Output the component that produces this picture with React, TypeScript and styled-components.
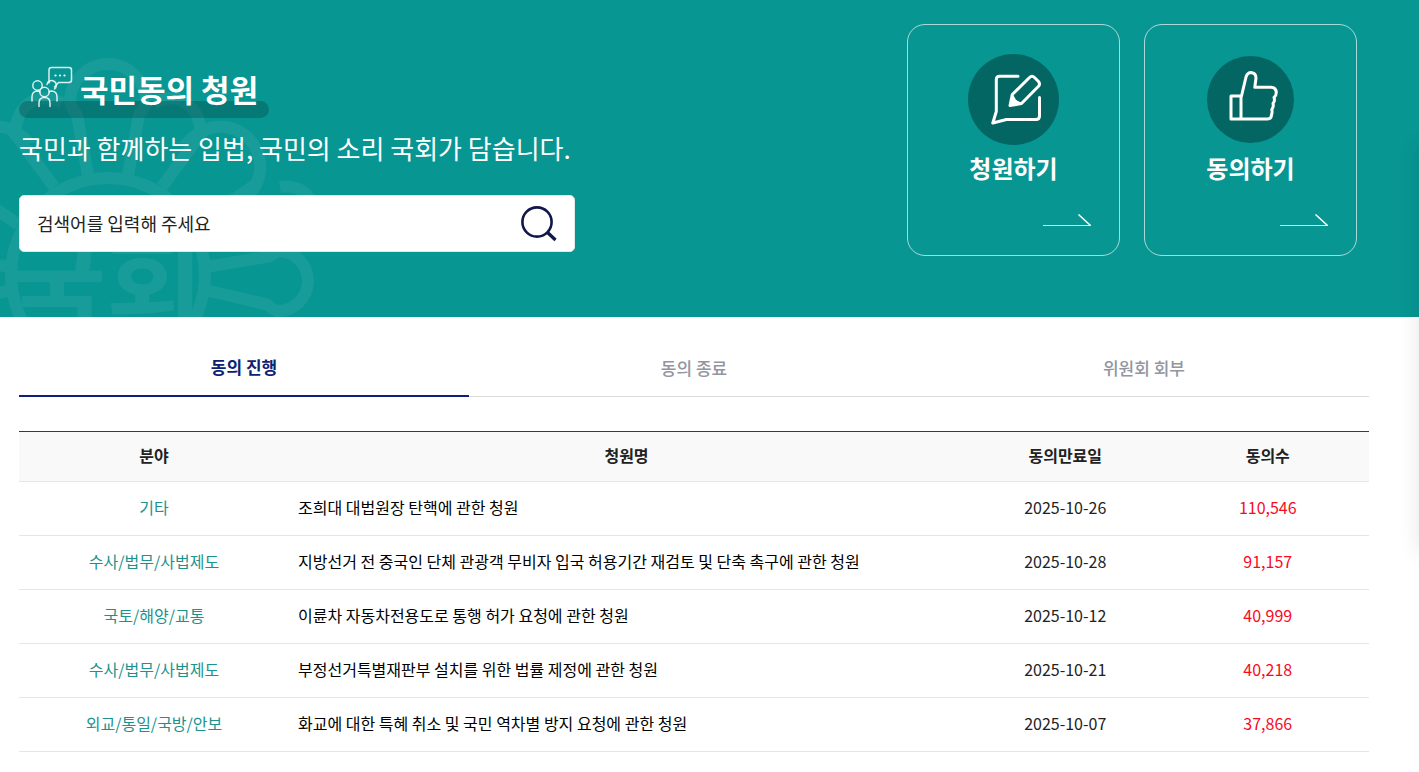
import React from "react";
import styled, { createGlobalStyle } from "styled-components";

const GlobalStyle = createGlobalStyle`
  * { box-sizing: border-box; }
  body {
    margin: 0;
    background: #fff;
    color: #222;
    font-family: "Noto Sans CJK KR", "Noto Sans", sans-serif;
    font-size: 16px;
    line-height: 24px;
    overflow-x: hidden;
  }
  a { color: inherit; text-decoration: none; }
  button, input { font-family: inherit; }
`;

const Hero = styled.header`
  position: relative;
  overflow: hidden;
  display: flex;
  justify-content: space-between;
  align-items: flex-start;
  gap: 24px;
  padding: 24px 62px 61px 19px;
  background: #089693;
  color: #fff;
`;

const Emblem = styled.svg`
  position: absolute;
  left: -120px;
  top: 50px;
  width: 456px;
  height: 456px;
  opacity: 0.06;
  pointer-events: none;
`;

const Intro = styled.div`
  position: relative;
  flex: 0 1 556px;
  padding-top: 42px;
`;

const Title = styled.h1`
  position: relative;
  display: inline-flex;
  align-items: flex-start;
  gap: 6px;
  height: 52px;
  margin: 0;
  padding: 0 11px;
  font-size: 31px;
  font-weight: 700;
  line-height: 46px;
  white-space: nowrap;

  &::before {
    content: "";
    position: absolute;
    left: 0;
    right: 0;
    bottom: 0;
    height: 17px;
    border-radius: 9px;
    background: rgba(0, 0, 0, 0.2);
  }

  svg, span { position: relative; }
  svg { flex: none; }
`;

const Slogan = styled.p`
  margin: 10px 0 27px;
  font-size: 26px;
  line-height: 40px;
  white-space: nowrap;
`;

const SearchForm = styled.form`
  display: flex;
  align-items: center;
  height: 57px;
  border: 1px solid #e1e8e8;
  border-radius: 5px;
  background: #fff;
`;

const SearchInput = styled.input`
  flex: 1;
  min-width: 0;
  height: 100%;
  padding: 0 17px 2px;
  border: 0;
  outline: 0;
  background: transparent;
  color: #222;
  font-size: 18px;

  &::placeholder { color: #222; opacity: 1; }
`;

const SearchButton = styled.button`
  display: flex;
  margin-right: 16px;
  padding: 0;
  border: 0;
  background: transparent;
  cursor: pointer;
`;

const Actions = styled.nav`
  position: relative;
  display: flex;
  gap: 24px;
`;

const ActionCard = styled.a`
  display: flex;
  flex-direction: column;
  align-items: center;
  width: 213px;
  height: 232px;
  padding: 29px 27px;
  border: 1px solid rgba(255, 255, 255, 0.65);
  border-radius: 18px;
`;

const IconDisc = styled.span<{ $size: number }>`
  display: flex;
  width: ${(p) => p.$size}px;
  height: ${(p) => p.$size}px;
  margin: ${(p) => (91 - p.$size) / 2}px 0;
  border-radius: 50%;
  background: #036663;
`;

const ActionLabel = styled.span`
  margin: 5px 0 28px;
  font-size: 24px;
  font-weight: 700;
  line-height: 36px;
`;

const Arrow = styled.svg`
  align-self: flex-end;
  flex: none;
`;

const Main = styled.main`
  padding: 22px 50px 20px 19px;
`;

const Tabs = styled.div`
  display: grid;
  grid-template-columns: repeat(3, 1fr);
  margin-bottom: 34px;
`;

const Tab = styled.button<{ $active?: boolean }>`
  height: 58px;
  padding: 0 0 1px;
  border: 0;
  border-bottom: ${(p) => (p.$active ? "2px solid #0d2275" : "1px solid #dcdcdc")};
  background: transparent;
  color: ${(p) => (p.$active ? "#0d2275" : "#9395a0")};
  font-size: 17px;
  font-weight: ${(p) => (p.$active ? 700 : 500)};
  cursor: pointer;
`;

const Table = styled.table`
  width: 100%;
  border-collapse: separate;
  border-spacing: 0;
  border-top: 1px solid #333a4a;
  table-layout: fixed;
`;

const HeadCell = styled.th<{ $width: string }>`
  width: ${(p) => p.$width};
  height: 50px;
  padding: 0 9px 4px;
  border-bottom: 1px solid #e6e6e6;
  background: #f9f9f9;
  font-weight: 700;
`;

const Cell = styled.td<{ $color?: string; $left?: boolean }>`
  height: 54px;
  padding: 0 9px 4px;
  border-bottom: 1px solid #e6e6e6;
  color: ${(p) => p.$color || "#222"};
  text-align: ${(p) => (p.$left ? "left" : "center")};
`;

const SideDrawer = styled.aside`
  position: fixed;
  left: 100%;
  top: 145px;
  width: 80px;
  height: 408px;
  box-shadow: 0 0 20px rgba(0, 0, 0, 0.1);
`;

/* One petal, pointing up from the emblem centre, turned to its place. */
const petals = [
  { turn: 0, foot: 20, neck: 31, tip: 211, round: 38 },
  { turn: 46, foot: 26, neck: 36, tip: 196, round: 40 },
  { turn: 92, foot: 12, neck: 24, tip: 200, round: 30 },
  { turn: 136, foot: 26, neck: 36, tip: 196, round: 40 },
  { turn: 180, foot: 20, neck: 31, tip: 211, round: 38 },
  { turn: -46, foot: 26, neck: 36, tip: 196, round: 40 },
  { turn: -92, foot: 12, neck: 24, tip: 200, round: 30 },
  { turn: -136, foot: 26, neck: 36, tip: 196, round: 40 },
];

const NationalEmblem = () => (
  <Emblem viewBox="-228 -225 456 456" aria-hidden="true">
    <g fill="none" stroke="#fff" strokeWidth="12">
      <circle r="97" />
      {petals.map((p) => (
        <path
          key={p.turn}
          transform={`rotate(${p.turn})`}
          d={`M${-p.foot} -100 L${-p.neck} -160 A${p.round} ${p.round} 0 0 1 ${-p.round} ${-p.tip + p.round} A${p.round} ${p.round} 0 0 1 ${p.round} ${-p.tip + p.round} A${p.round} ${p.round} 0 0 1 ${p.neck} -160 L${p.foot} -100`}
        />
      ))}
      <path d="M46 -172 C70 -186 96 -168 92 -136 M-46 -172 C-70 -186 -96 -168 -92 -136 M172 -88 C196 -92 212 -72 204 -48 C200 -36 190 -26 176 -22" />
    </g>
    <text x="-2" y="46" textAnchor="middle" fill="#fff" fontSize="106" fontWeight="700">
      국회
    </text>
  </Emblem>
);

const PeopleIcon = () => (
  <svg width="44" height="44" viewBox="0 0 44 44" fill="none" stroke="#fff" strokeOpacity="0.85" strokeWidth="1.5" strokeLinecap="round" strokeLinejoin="round" aria-hidden="true">
    <path d="M19 17 V4 Q19 1.500 21.500 1.500 H39 Q41.500 1.500 41.500 4 V14 Q41.500 16.500 39 16.500 H28.500 L24.500 21" />
    <circle cx="7.500" cy="19.500" r="4.700" />
    <path d="M17 18.500 A4.700 4.700 0 1 1 24.500 23" />
    <circle cx="14.500" cy="26" r="4.700" />
    <path d="M2 35 V31 Q2 25.500 7 25 Q9 25 10 26" />
    <path d="M19 26 Q20 25 22 25 Q27 25.500 27 31 V35" />
    <path d="M9 40.500 V37 Q9 31.500 14.500 31.500 Q20 31.500 20 37 V40.500" />
    <g fill="#fff" stroke="none">
      <circle cx="25.500" cy="9.500" r="1.100" />
      <circle cx="30" cy="9.500" r="1.100" />
      <circle cx="34.500" cy="9.500" r="1.100" />
    </g>
  </svg>
);

const WriteIcon = () => (
  <svg width="91" height="91" viewBox="0 0 91 91" fill="none" stroke="#fff" strokeWidth="3" strokeLinecap="round" strokeLinejoin="round" aria-hidden="true">
    <path d="M50 22.300 H31.500 Q28.300 22.300 28.300 25.500 V57.500 L24.800 69 L38.500 65.500 H68 Q71.500 65.500 71.500 62 V43.500" />
    <path d="M42 51.500 L44.300 40.500 L61.500 23.500 Q64 21 66.500 23.500 L70.500 27.500 Q72.500 30 70.500 32.300 L53.500 49.500 Z" />
    <path d="M42 51.500 L44.300 41 L47.500 46.500 L53 49.500 Z" fill="#fff" strokeWidth="1.500" />
  </svg>
);

const ThumbIcon = () => (
  <svg width="87" height="87" viewBox="0 0 87 87" fill="none" stroke="#fff" strokeWidth="3" strokeLinejoin="round" aria-hidden="true">
    <path d="M24 40 H34.500 L39 21 Q40.500 16.500 44 16.500 Q49 17 49 22 L47.800 31.300 H64 Q69 31.500 69.300 36.500 Q69.300 39.500 67 41.500 Q68.300 45 66 47.500 Q67 51 64.800 53.500 Q65.500 56 64.500 59 Q64.300 63 60.500 63 H24 Z" />
    <path d="M34 40 V63" />
  </svg>
);

const ArrowIcon = () => (
  <Arrow width="49" height="13" viewBox="0 0 49 13" fill="none" stroke="#fff" aria-hidden="true">
    <path d="M0 11.500 H48" strokeOpacity="0.8" />
    <path d="M35.500 0.500 L47.500 11.500" strokeWidth="1.500" />
  </Arrow>
);

const SearchIcon = () => (
  <svg width="40" height="40" viewBox="0 0 40 40" fill="none" stroke="#10174a" strokeWidth="2.600" aria-hidden="true">
    <circle cx="19" cy="18" r="14.600" />
    <path d="M29 28 L37.500 36" strokeWidth="3.200" />
  </svg>
);

const rows = [
  ["기타", "조희대 대법원장 탄핵에 관한 청원", "2025-10-26", "110,546"],
  ["수사/법무/사법제도", "지방선거 전 중국인 단체 관광객 무비자 입국 허용기간 재검토 및 단축 촉구에 관한 청원", "2025-10-28", "91,157"],
  ["국토/해양/교통", "이륜차 자동차전용도로 통행 허가 요청에 관한 청원", "2025-10-12", "40,999"],
  ["수사/법무/사법제도", "부정선거특별재판부 설치를 위한 법률 제정에 관한 청원", "2025-10-21", "40,218"],
  ["외교/통일/국방/안보", "화교에 대한 특혜 취소 및 국민 역차별 방지 요청에 관한 청원", "2025-10-07", "37,866"],
];

export default function App() {
  return (
    <>
      <GlobalStyle />
      <Hero>
        <NationalEmblem />
        <Intro>
          <Title>
            <PeopleIcon />
            <span>국민동의 청원</span>
          </Title>
          <Slogan>국민과 함께하는 입법, 국민의 소리 국회가 담습니다.</Slogan>
          <SearchForm role="search" onSubmit={(e) => e.preventDefault()}>
            <SearchInput type="text" aria-label="검색어" placeholder="검색어를 입력해 주세요" />
            <SearchButton type="submit" aria-label="검색">
              <SearchIcon />
            </SearchButton>
          </SearchForm>
        </Intro>
        <Actions>
          <ActionCard href="#write">
            <IconDisc $size={91}><WriteIcon /></IconDisc>
            <ActionLabel>청원하기</ActionLabel>
            <ArrowIcon />
          </ActionCard>
          <ActionCard href="#agree">
            <IconDisc $size={87}><ThumbIcon /></IconDisc>
            <ActionLabel>동의하기</ActionLabel>
            <ArrowIcon />
          </ActionCard>
        </Actions>
      </Hero>
      <Main>
        <Tabs role="tablist">
          <Tab type="button" role="tab" aria-selected="true" $active>동의 진행</Tab>
          <Tab type="button" role="tab" aria-selected="false">동의 종료</Tab>
          <Tab type="button" role="tab" aria-selected="false">위원회 회부</Tab>
        </Tabs>
        <Table>
          <thead>
            <tr>
              <HeadCell scope="col" $width="20%">분야</HeadCell>
              <HeadCell scope="col" $width="50%">청원명</HeadCell>
              <HeadCell scope="col" $width="15%">동의만료일</HeadCell>
              <HeadCell scope="col" $width="15%">동의수</HeadCell>
            </tr>
          </thead>
          <tbody>
            {rows.map(([field, name, due, count]) => (
              <tr key={name}>
                <Cell $color="#1a938f">{field}</Cell>
                <Cell $left $color="#000"><a href="#petition">{name}</a></Cell>
                <Cell>{due}</Cell>
                <Cell $color="#f90a1e">{count}</Cell>
              </tr>
            ))}
          </tbody>
        </Table>
      </Main>
      <SideDrawer />
    </>
  );
}
